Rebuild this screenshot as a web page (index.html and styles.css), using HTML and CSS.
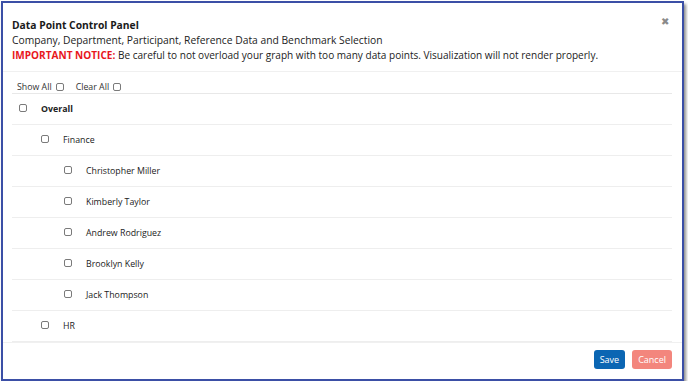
FILE: index.html
```html
<!DOCTYPE html>
<html>
<head>
<meta charset="utf-8">
<link rel="stylesheet" href="styles.css">
</head>
<body>
<div class="modal">
  <div class="modal-header">
    <div class="titles">
      <div class="title">Data Point Control Panel</div>
      <div class="subtitle">Company, Department, Participant, Reference Data and Benchmark Selection</div>
      <div class="notice"><span class="notice-label">IMPORTANT NOTICE:</span> Be careful to not overload your graph with too many data points. Visualization will not render properly.</div>
    </div>
    <span class="close">&#10006;</span>
  </div>
  <div class="modal-body">
    <div class="toolbar">
      <label class="tool">Show All <span class="cb"></span></label>
      <label class="tool">Clear All <span class="cb"></span></label>
    </div>
    <div class="row lvl0"><span class="cb"></span><span class="label bold">Overall</span></div>
    <div class="row lvl1"><span class="cb"></span><span class="label">Finance</span></div>
    <div class="row lvl2"><span class="cb"></span><span class="label">Christopher Miller</span></div>
    <div class="row lvl2"><span class="cb"></span><span class="label">Kimberly Taylor</span></div>
    <div class="row lvl2"><span class="cb"></span><span class="label">Andrew Rodriguez</span></div>
    <div class="row lvl2"><span class="cb"></span><span class="label">Brooklyn Kelly</span></div>
    <div class="row lvl2"><span class="cb"></span><span class="label">Jack Thompson</span></div>
    <div class="row lvl1"><span class="cb"></span><span class="label">HR</span></div>
  </div>
  <div class="modal-footer">
    <button class="btn btn-save">Save</button>
    <button class="btn btn-cancel">Cancel</button>
  </div>
</div>
</body>
</html>
```
FILE: styles.css
```css
* { box-sizing: border-box; }
html, body { margin: 0; padding: 0; background: #fff; }
body {
  font-family: "Open Sans", "Noto Sans", sans-serif;
  color: #222;
  padding: 1px 0 0 1px;
}
.modal {
  width: 683px;
  height: 380px;
  border: 2px solid #3b4fa6;
  background: #fff;
  box-shadow: 2px 3px 3px rgba(0,0,0,0.45);
  display: flex;
  flex-direction: column;
}
.modal-header {
  display: flex;
  justify-content: space-between;
  align-items: flex-start;
  padding: 15px 12px 10px 9px;
  border-bottom: 1px solid #f0f0f0;
  height: 69px;
  flex: none;
}
.title { font-weight: 700; font-size: 10.3px; line-height: 14px; color: #1a1a1a; }
.subtitle, .notice { font-size: 10.3px; line-height: 14.5px; color: #222; }
.subtitle { margin-top: 1px; }
.notice { font-size: 10.05px; }
.notice-label { color: #e8161c; font-weight: 700; }
.close { color: #8a8a8a; font-size: 10px; line-height: 10px; margin-top: -2px; margin-right: 1px; }
.modal-body { padding: 0 10px 0 9px; flex: 1; }
.toolbar {
  display: flex;
  gap: 12px;
  align-items: center;
  height: 22px;
  padding: 8px 0 0 5px;
  font-size: 8.8px;
  color: #333;
  border-bottom: 1px solid #e8e8e8;
}
.tool { display: flex; align-items: center; gap: 4px; }
.row {
  display: flex;
  align-items: center;
  height: 31px;
  border-bottom: 1px solid #eeeeee;
  font-size: 8.8px;
  color: #222;
}
.row .cb { margin-top: -3px; }
.lvl0 { padding-left: 7px; }
.lvl1 { padding-left: 29px; }
.lvl2 { padding-left: 52px; }
.label { margin-left: 14px; }
.bold { font-weight: 700; }
.cb {
  display: inline-block;
  width: 8px;
  height: 8px;
  border: 1px solid #7a7a7a;
  border-radius: 2px;
  background: #fff;
}
.modal-footer {
  flex: none;
  height: 38px;
  border-top: 1px solid #f0f0f0;
  display: flex;
  justify-content: flex-end;
  align-items: center;
  gap: 7px;
  padding: 0 10px 4px 0;
}
.btn {
  font-family: "Open Sans", "Noto Sans", sans-serif;
  font-size: 9px;
  color: #fff;
  border: none;
  border-radius: 3px;
  height: 19px;
  padding: 0 6px;
}
.btn-save { background: #0b66b3; }
.btn-cancel { background: #f3867d; }
```
